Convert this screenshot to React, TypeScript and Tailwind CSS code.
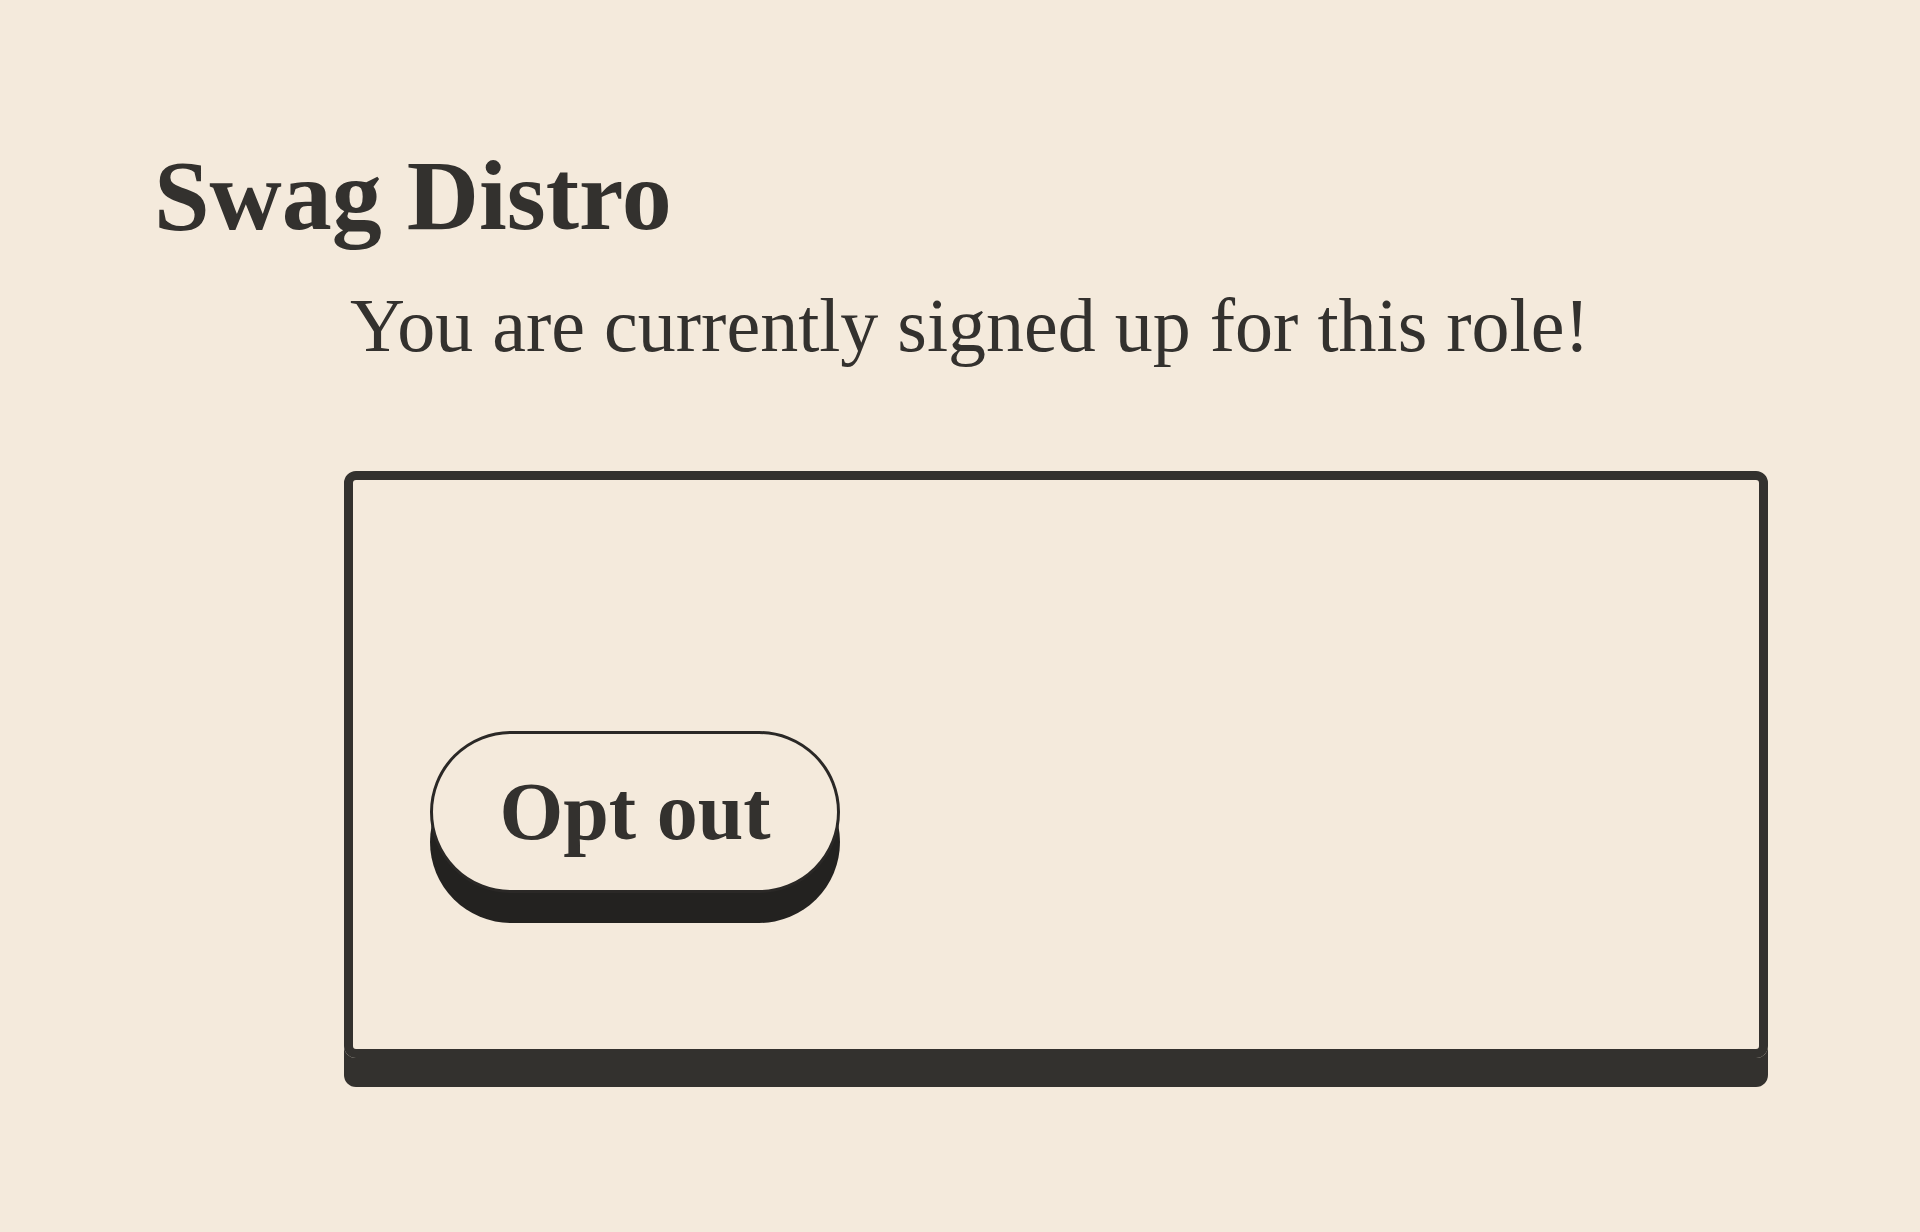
export default function App() {
  return (
    <div className="min-h-[1232px] w-full bg-[#f4eadc] text-[#33312e] px-[152px] pt-[136px] font-['Liberation_Serif',_'DejaVu_Serif',_serif]">
      <h1 className="text-[100px] font-bold leading-[1.2] ml-[2px]">Swag Distro</h1>
      <div className="pl-[192px]">
        <p className="text-[76px] leading-[1.2] mt-[24px] ml-[6px]">You are currently signed up for this role!</p>
        <div className="mt-[100px] h-[587px] rounded-xl border-[9px] border-[#33312e] shadow-[0_29px_0_0_#33312e] flex items-end pl-[77px] pb-[156px]">
          <button className="w-[410px] h-[162px] rounded-full border-[3px] border-[#2a2826] bg-[#f4eadc] shadow-[0_30px_0_0_#232220] text-[82px] font-bold leading-none text-[#33312e] flex items-center justify-center">
            Opt out
          </button>
        </div>
      </div>
    </div>
  );
}
